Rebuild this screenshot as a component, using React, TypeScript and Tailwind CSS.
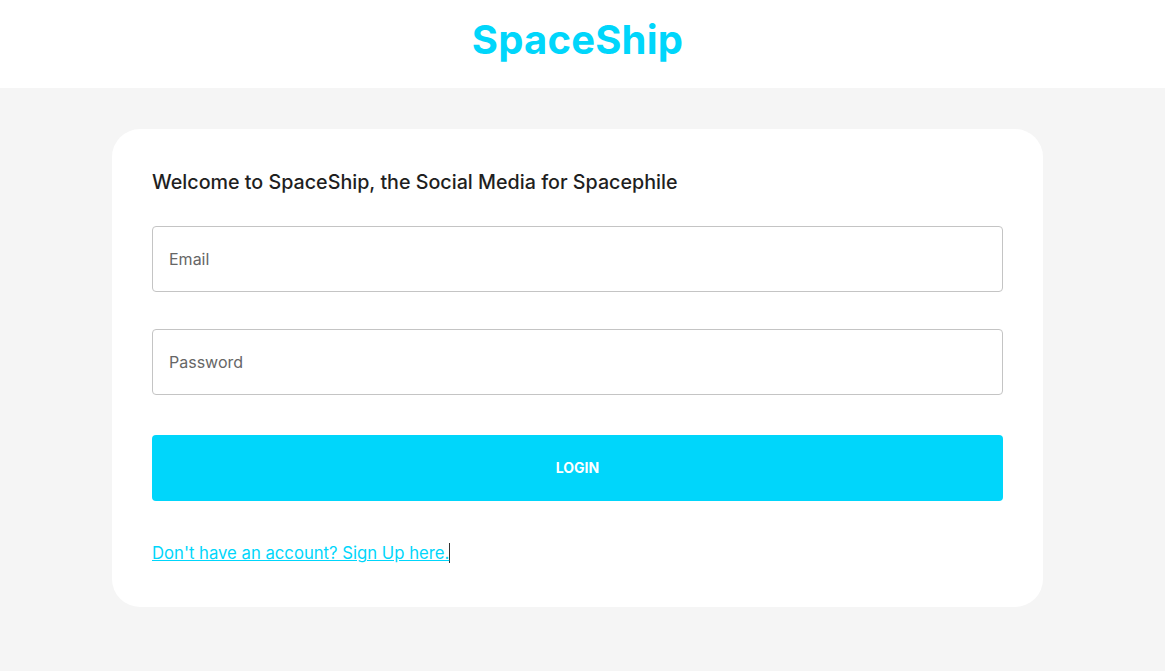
export default function App() {
  return (
    <main className="flex min-h-screen flex-col bg-[#f5f5f5] pr-[10px] font-['Inter',sans-serif]">
      {/* top bar */}
      <header className="-mr-[10px] flex h-[88px] items-center justify-center bg-white pr-[10px] pb-[9px]">
        <h1 className="text-[40px] font-bold tracking-[0.2px] text-[#00d6fb]">SpaceShip</h1>
      </header>

      {/* login card */}
      <section className="mx-auto mt-[41px] w-[931px] rounded-[28px] bg-white px-10 pt-10 pb-[42px]">
        <h2 className="text-[19.7px] leading-[26px] font-medium text-[#1f1f1f]">
          Welcome to SpaceShip, the Social Media for Spacephile
        </h2>
        <form className="mt-[31px] flex flex-col" onSubmit={(e) => e.preventDefault()}>
          <input
            type="email"
            placeholder="Email"
            className="h-[66px] w-full rounded-[4px] border border-[#c4c4c4] px-4 text-base text-[#333] placeholder:text-[#666] outline-none"
          />
          <input
            type="password"
            placeholder="Password"
            className="mt-[37px] h-[66px] w-full rounded-[4px] border border-[#c4c4c4] px-4 text-base text-[#333] placeholder:text-[#666] outline-none"
          />
          <button
            type="submit"
            className="mt-10 h-[66px] w-full rounded-[4px] bg-[#00d6fb] text-sm font-bold text-white"
          >
            LOGIN
          </button>
        </form>
        <p className="mt-10 leading-6">
          <a href="#" className="border-r border-[#333] text-[16.7px] text-[#00d6fb] underline">
            Don't have an account? Sign Up here.
          </a>
        </p>
      </section>
    </main>
  );
}
